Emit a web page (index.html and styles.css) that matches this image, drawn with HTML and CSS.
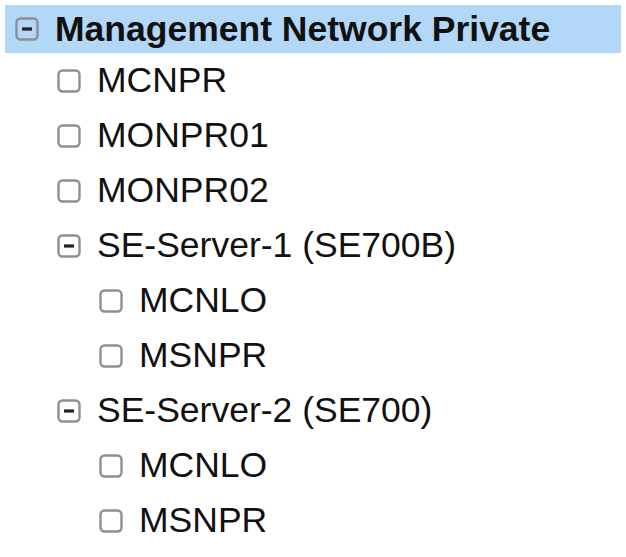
FILE: index.html
```html
<!DOCTYPE html>
<html lang="en">
<head>
  <meta charset="UTF-8" />
  <title>Network Tree</title>
  <link rel="stylesheet" href="styles.css">
</head>
<body>
  <div class="tree">
    <div class="node root selected">
      <svg class="box" viewBox="0 0 24 24"><rect x="1.5" y="1.5" width="21" height="21" rx="4"/><line class="minus" x1="7" y1="12" x2="17" y2="12"/></svg>
      <span class="label">Management Network Private</span>
    </div>
    <ul class="children">
      <li class="node"><svg class="box" viewBox="0 0 24 24"><rect x="1.5" y="1.5" width="21" height="21" rx="4"/></svg><span class="label">MCNPR</span></li>
      <li class="node"><svg class="box" viewBox="0 0 24 24"><rect x="1.5" y="1.5" width="21" height="21" rx="4"/></svg><span class="label">MONPR01</span></li>
      <li class="node"><svg class="box" viewBox="0 0 24 24"><rect x="1.5" y="1.5" width="21" height="21" rx="4"/></svg><span class="label">MONPR02</span></li>
      <li class="node"><svg class="box" viewBox="0 0 24 24"><rect x="1.5" y="1.5" width="21" height="21" rx="4"/><line class="minus" x1="7" y1="12" x2="17" y2="12"/></svg><span class="label">SE-Server-1 (SE700B)</span></li>
      <li>
        <ul class="children">
          <li class="node"><svg class="box" viewBox="0 0 24 24"><rect x="1.5" y="1.5" width="21" height="21" rx="4"/></svg><span class="label">MCNLO</span></li>
          <li class="node"><svg class="box" viewBox="0 0 24 24"><rect x="1.5" y="1.5" width="21" height="21" rx="4"/></svg><span class="label">MSNPR</span></li>
        </ul>
      </li>
      <li class="node"><svg class="box" viewBox="0 0 24 24"><rect x="1.5" y="1.5" width="21" height="21" rx="4"/><line class="minus" x1="7" y1="12" x2="17" y2="12"/></svg><span class="label">SE-Server-2 (SE700)</span></li>
      <li>
        <ul class="children">
          <li class="node"><svg class="box" viewBox="0 0 24 24"><rect x="1.5" y="1.5" width="21" height="21" rx="4"/></svg><span class="label">MCNLO</span></li>
          <li class="node"><svg class="box" viewBox="0 0 24 24"><rect x="1.5" y="1.5" width="21" height="21" rx="4"/></svg><span class="label">MSNPR</span></li>
        </ul>
      </li>
    </ul>
  </div>
</body>
</html>
```

FILE: styles.css
```css
body {
  margin: 0;
  background-color: #fff;
  font-family: "Liberation Sans", Arial, sans-serif;
  color: #111;
}

.tree {
  padding-top: 5px;
}

.node {
  display: flex;
  align-items: center;
  gap: 16px;
  height: 55px;
  font-size: 35.5px;
}

.root {
  height: 48px;
  margin: 0 5px;
  padding-left: 10px;
  font-weight: bold;
}

.selected {
  background-color: #b3d7f7;
}

.children {
  list-style: none;
  margin: 0;
  padding: 0 0 0 42px;
}

.tree > .children {
  padding-left: 57px;
}

.box {
  width: 24px;
  height: 24px;
  flex-shrink: 0;
}

.box rect {
  fill: #fff;
  stroke: #8e8e98;
  stroke-width: 2.4;
}

.selected .box rect {
  fill: none;
}

.box .minus {
  stroke: #222;
  stroke-width: 3.2;
}
```
